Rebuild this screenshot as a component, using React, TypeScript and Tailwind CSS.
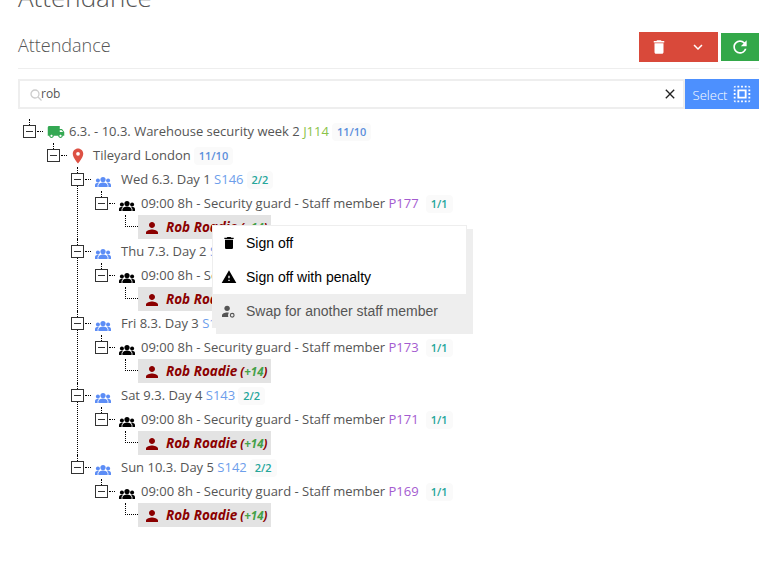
import React from 'react';
import { MdDelete, MdExpandMore, MdRefresh, MdSelectAll, MdClose, MdLocalShipping, MdPlace, MdPerson, MdWarning } from 'react-icons/md';

interface NodeProps {
  icon: React.ReactNode;
  iconClass: string;
  label: React.ReactNode;
  trunk?: boolean;
  children?: React.ReactNode;
}

function GroupIcon({ className }: { className: string }) {
  return (
    <svg viewBox="0 0 16 10" className={className} fill="currentColor">
      <circle cx="8" cy="2.600" r="2.600" />
      <circle cx="2.900" cy="3.400" r="2" />
      <circle cx="13.100" cy="3.400" r="2" />
      <path d="M3.400 10V8.400C3.400 6.400 6 5.400 8 5.400s4.600 1 4.600 3V10z" />
      <path d="M0 10V8C0 6.600 1.600 5.800 3.400 5.800c.3 0 .5 0 .7.1C3 6.600 2.600 7.600 2.600 8.400V10z" />
      <path d="M16 10V8c0-1.400-1.600-2.200-3.400-2.200-.3 0-.5 0-.7.1 1.100.7 1.500 1.700 1.500 2.500V10z" />
    </svg>
  );
}

function SwapIcon({ className }: { className: string }) {
  return (
    <svg viewBox="0 0 14 14" className={className} fill="currentColor">
      <circle cx="5.500" cy="3.600" r="2.900" />
      <path d="M0 13v-1.600c0-2.100 2.900-3.300 5.500-3.300.7 0 1.300.1 1.900.2-.6.800-.9 1.700-.9 2.700 0 .7.100 1.400.4 2z" />
      <circle cx="11" cy="11" r="2" fill="none" stroke="currentColor" strokeWidth="1.200" />
    </svg>
  );
}

function TreeNode({ icon, iconClass, label, trunk, children }: NodeProps) {
  return (
    <li className="relative">
      {trunk && <span className="absolute left-[6px] top-[19px] bottom-0 border-l border-dotted border-black" />}
      <div className="relative flex h-6 items-center">
        <span className="absolute left-[6px] top-0 h-[6px] border-l border-dotted border-black" />
        <span className="absolute left-[14px] top-[12px] w-[6px] border-t border-dotted border-black" />
        <span className="flex h-[13px] w-[13px] items-center justify-center border border-[#333] bg-white">
          <span className="h-px w-[7px] bg-[#333]" />
        </span>
        <span className={`ml-[11px] flex items-center ${iconClass}`}>{icon}</span>
        <span className="whitespace-nowrap pt-px">{label}</span>
      </div>
      {children && <ul className="ml-6">{children}</ul>}
    </li>
  );
}

function Badge({ value, teal }: { value: string; teal?: boolean }) {
  return (
    <span className={`ml-[3px] inline-block rounded-[4px] bg-[#fafafa] px-[5px] text-[11px] font-semibold leading-[18px] ${teal ? 'text-[#26a69a]' : 'text-[#5c8fdc]'}`}>
      {value}
    </span>
  );
}

function StaffPill() {
  return (
    <li className="relative h-6 pl-[19px]">
      <span className="absolute left-[6px] top-0 h-3 w-[13px] border-b border-l border-dotted border-black" />
      <div className="flex h-6 w-[133px] items-center bg-[#e3e3e3] pl-[5px]">
        <MdPerson className="mt-[2px] h-[18px] w-[18px] text-[#8b0000]" />
        <span className="ml-[5px] mt-[2px] whitespace-nowrap text-[13.5px] font-bold italic leading-none text-[#8b0000]">Rob Roadie</span>
        <span className="ml-[3px] mt-[2px] whitespace-nowrap text-[11.5px] font-bold italic leading-none text-[#8b0000]">
          (<span className="text-[#43a047]">+14</span>)
        </span>
      </div>
    </li>
  );
}

const days = [
  { day: 'Wed 6.3. Day 1', shift: 'S146', post: 'P177' },
  { day: 'Thu 7.3. Day 2', shift: 'S145', post: 'P175' },
  { day: 'Fri 8.3. Day 3', shift: 'S144', post: 'P173' },
  { day: 'Sat 9.3. Day 4', shift: 'S143', post: 'P171' },
  { day: 'Sun 10.3. Day 5', shift: 'S142', post: 'P169' },
];

export default function App() {
  return (
    <div className="h-[563px] w-full overflow-hidden bg-white pl-[18px] pr-[15px] font-['Open_Sans',sans-serif] text-[13px] text-[#555]">
      <h1 className="-mt-[19px] h-[32px] text-[26px] font-light leading-[32px] text-[#555]">Attendance</h1>

      <div className="mt-[16px] flex h-[40px] items-center justify-between border-b border-[#eee] pb-[8px] pt-[2px]">
        <h2 className="text-[18px] font-light text-[#555]">Attendance</h2>
        <div className="mt-[3px] flex items-center gap-[3px]">
          <button className="flex h-[30px] w-[79px] items-center justify-between bg-[#d9493a] pl-[11px] pr-[11px] text-white">
            <MdDelete className="h-[18px] w-[18px]" />
            <MdExpandMore className="h-[18px] w-[18px]" />
          </button>
          <button className="flex h-[28px] w-[38px] items-center justify-center bg-[#33a849] text-white">
            <MdRefresh className="h-[20px] w-[20px]" />
          </button>
        </div>
      </div>

      <div className="mt-[10px] flex h-[30px]">
        <div className="relative flex flex-1 items-center border-2 border-[#eee] pl-[21px] pr-[5px]">
          <svg viewBox="0 0 12 12" className="absolute left-[10px] top-[8px] h-[12px] w-[12px] text-[#ccc]" fill="none" stroke="currentColor" strokeWidth="1.300">
            <circle cx="5" cy="5" r="4" />
            <path d="M8 8l3.500 3.500" />
          </svg>
          <input readOnly defaultValue="rob" className="h-full min-w-0 flex-1 bg-transparent pb-[2px] text-[12px] text-[#555] outline-none" />
          <MdClose className="h-[16px] w-[16px] text-[#222]" />
        </div>
        <button className="flex w-[74px] items-center justify-center gap-[4px] bg-[#4d90fe] pl-[2px] text-[13px] font-light text-white">
          <span className="mt-[3px]">Select</span>
          <MdSelectAll className="h-[22px] w-[22px]" />
        </button>
      </div>

      <div className="relative mt-[10px] pl-[5px]">
        <ul>
          <TreeNode
            icon={<MdLocalShipping className="mt-[2px] h-[18px] w-[18px] text-[#34a853]" />}
            iconClass="w-[22px]"
            label={<>6.3. - 10.3. Warehouse security week 2 <span className="text-[#8bc34a]">J114</span><Badge value="11/10" /></>}
          >
            <TreeNode
              icon={<MdPlace className="-ml-[2px] mt-[2px] h-[18px] w-[18px] text-[#dd5144]" />}
              iconClass="w-[22px]"
              label={<>Tileyard London<Badge value="11/10" /></>}
            >
              {days.map((d, i) => (
                <TreeNode
                  key={d.day}
                  trunk={i < days.length - 1}
                  icon={<GroupIcon className="mt-[5px] h-[10px] w-[16px] text-[#5c8df6]" />}
                  iconClass="w-[26px]"
                  label={<>{d.day} <span className="text-[#6d9eeb]">{d.shift}</span><Badge value="2/2" teal /></>}
                >
                  <TreeNode
                    icon={<GroupIcon className="mt-[5px] h-[10px] w-[16px] text-black" />}
                    iconClass="w-[22px]"
                    label={<>09:00 8h - Security guard - Staff member <span className="text-[#a45bd0]">{d.post}</span><span className="ml-[4px]"><Badge value="1/1" teal /></span></>}
                  >
                    <StaffPill />
                  </TreeNode>
                </TreeNode>
              ))}
            </TreeNode>
          </TreeNode>
        </ul>

        <div className="absolute left-[194px] top-[106px] w-[255px] border border-[#eee] bg-white font-['Liberation_Sans',sans-serif] text-[14px] text-black shadow-[5px_5px_0_1px_#eee]">
          <div className="flex h-[34px] items-center pl-[8px]">
            <MdDelete className="h-[16px] w-[16px]" />
            <span className="ml-[9px]">Sign off</span>
          </div>
          <div className="flex h-[34px] items-center pl-[8px]">
            <MdWarning className="h-[16px] w-[16px]" />
            <span className="ml-[9px]">Sign off with penalty</span>
          </div>
          <div className="flex h-[33px] items-center bg-[#eee] pl-[9px] pt-[2px] text-[#555]">
            <SwapIcon className="h-[13px] w-[13px]" />
            <span className="ml-[11px]">Swap for another staff member</span>
          </div>
        </div>
      </div>
    </div>
  );
}
